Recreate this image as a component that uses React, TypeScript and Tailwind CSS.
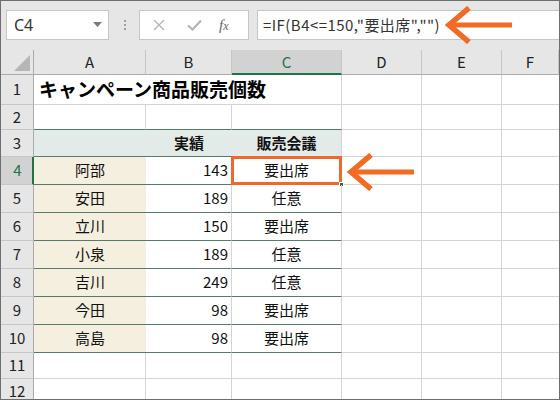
import React from 'react'

const FONT = { fontFamily: '"Noto Sans CJK JP", "Noto Sans", sans-serif' }

type Row = { a?: string; b?: string; c?: string }

// Sheet rows 1..12, only the table part carries data
const rows: Row[] = [
  {},
  {},
  { b: '実績', c: '販売会議' },
  { a: '阿部', b: '143', c: '要出席' },
  { a: '安田', b: '189', c: '任意' },
  { a: '立川', b: '150', c: '要出席' },
  { a: '小泉', b: '189', c: '任意' },
  { a: '吉川', b: '249', c: '任意' },
  { a: '今田', b: '98', c: '要出席' },
  { a: '高島', b: '98', c: '要出席' },
  {},
  {},
]

const colLetters = ['A', 'B', 'C', 'D', 'E', 'F']

function Toolbar() {
  return (
    <div className="flex h-[49px] items-start bg-[#e6e6e6] pt-[9px]">
      <div className="ml-[5px] flex h-[30px] w-[103px] items-center justify-between border border-[#c6c6c6] bg-white pl-[7px] pr-[6px]">
        <span className="text-[16px] text-[#333]" style={{ fontFamily: '"Noto Sans", sans-serif' }}>C4</span>
        <svg width="9" height="6" viewBox="0 0 9 6">
          <path d="M0 0 L9 0 L4.5 5 Z" fill="#7a7a7a" />
        </svg>
      </div>
      <div className="ml-[15px] flex h-[30px] flex-col items-center justify-center gap-[2px]">
        <span className="h-[2px] w-[2px] bg-[#a0a0a0]" />
        <span className="h-[2px] w-[2px] bg-[#a0a0a0]" />
        <span className="h-[2px] w-[2px] bg-[#a0a0a0]" />
      </div>
      <div className="ml-[13px] flex h-[30px] w-[110px] items-center border border-[#c6c6c6] bg-white">
        <svg className="ml-[13px]" width="12" height="12" viewBox="0 0 12 12">
          <path d="M1 1 L11 11 M11 1 L1 11" stroke="#b5b5b5" strokeWidth="1.4" />
        </svg>
        <svg className="ml-[22px]" width="15" height="12" viewBox="0 0 15 12">
          <path d="M1 6.5 L5.5 10.5 L14 1.5" stroke="#b5b5b5" strokeWidth="2.2" fill="none" />
        </svg>
        <span
          className="ml-[17px] text-[15px] italic text-[#666]"
          style={{ fontFamily: '"Liberation Serif", serif' }}
        >
          f<span className="text-[12px]">x</span>
        </span>
      </div>
      <div className="ml-[8px] flex h-[30px] flex-1 items-center border border-r-0 border-[#c6c6c6] bg-white pl-[5px]">
        <span className="text-[15px] tracking-[0.45px] text-[#333]" style={FONT}>
          =IF(B4&lt;=150,"要出席","")
        </span>
      </div>
    </div>
  )
}

function Arrow({ className }: { className: string }) {
  return (
    <svg className={className} width="70" height="38" viewBox="0 0 70 38">
      <path d="M24 2 L4 19 L24 36" stroke="#f26a24" strokeWidth="5.5" fill="none" strokeLinejoin="miter" />
      <path d="M5 19 L67 19" stroke="#f26a24" strokeWidth="5" />
    </svg>
  )
}

export default function App() {
  return (
    <div
      className="relative h-[400px] w-[560px] overflow-hidden border border-[#6e6e6e] bg-white"
      style={FONT}
    >
      <Toolbar />

      <div className="grid grid-cols-[33px_112px_86px_110px_80px_80px_1fr] grid-rows-[25px_30px_25px_27px_28px_28px_28px_28px_28px_28px_28px_26px_26px]">
        {/* header row */}
        <div className="relative border-r border-b border-[#ababab] bg-[#e6e6e6]">
          <svg className="absolute bottom-[3px] right-[3px]" width="16" height="16" viewBox="0 0 16 16">
            <path d="M16 0 L16 16 L0 16 Z" fill="#b6b6b6" />
          </svg>
        </div>
        {colLetters.map((l) =>
          l === 'C' ? (
            <div
              key={l}
              className="flex items-center justify-center border-r border-b-2 border-r-[#c6c6c6] border-b-[#217346] bg-[#d2d2d2] pt-[1px] text-[15px] text-[#217346]"
            >
              {l}
            </div>
          ) : (
            <div
              key={l}
              className="flex items-center justify-center border-r border-b border-r-[#c6c6c6] border-b-[#ababab] bg-[#e6e6e6] text-[15px] text-[#222]"
            >
              {l}
            </div>
          ),
        )}

        {rows.map((r, i) => {
          const n = i + 1
          const inTable = n >= 3 && n <= 10
          const dark = n >= 2 && n <= 10
          const rowHeader =
            n === 4 ? (
              <div className="flex items-center justify-center border-r-2 border-b border-r-[#217346] border-b-[#c6c6c6] bg-[#d2d2d2] pl-[2px] text-[15px] text-[#217346]">
                {n}
              </div>
            ) : (
              <div className="flex items-center justify-center border-r border-b border-r-[#ababab] border-b-[#c6c6c6] bg-[#e6e6e6] text-[15px] text-[#222]">
                {n}
              </div>
            )

          const bottom = dark ? 'border-b border-b-[#587a6d]' : 'border-b border-b-[#d4d4d4]'

          let aCls = 'flex items-center justify-center text-[15px] text-[#111] '
          let bCls = 'flex items-center text-[15px] text-[#111] '
          let cCls = 'relative flex items-center justify-center text-[15px] text-[#111] '
          if (n === 1) {
            aCls += 'border-b border-b-[#d4d4d4]'
            bCls += 'border-b border-b-[#d4d4d4]'
            cCls += 'border-r border-b border-[#d4d4d4]'
          } else if (n === 3) {
            aCls += bottom + ' bg-[#e3ebe8]'
            bCls += bottom + ' justify-center bg-[#e3ebe8] font-bold'
            cCls += bottom + ' border-r border-r-[#d4d4d4] bg-[#e3ebe8] font-bold'
          } else if (inTable) {
            aCls += bottom + ' bg-[#f5efdf]'
            bCls += bottom + ' justify-end border-r border-r-[#d4d4d4] pr-[3px]'
            cCls += bottom + ' border-r border-r-[#d4d4d4]'
          } else {
            aCls += bottom + ' border-r border-r-[#d4d4d4]'
            bCls += bottom + ' border-r border-r-[#d4d4d4]'
            cCls += bottom + ' border-r border-r-[#d4d4d4]'
          }

          return (
            <React.Fragment key={n}>
              {rowHeader}
              {n === 1 ? (
                <div className={aCls + ' relative z-10 justify-start overflow-visible'}>
                  <span className="ml-[5px] whitespace-nowrap text-[19px] font-bold text-black">
                    キャンペーン商品販売個数
                  </span>
                </div>
              ) : (
                <div className={aCls}>{r.a}</div>
              )}
              <div className={bCls}>{r.b}</div>
              <div className={cCls}>
                {r.c}
                {n === 4 && (
                  <>
                    <div className="absolute inset-[-1px] border-[3px] border-[#ef6a2a]" />
                    <div className="absolute bottom-[-3px] right-[-3px] h-[5px] w-[5px] border border-white bg-[#217346]" />
                  </>
                )}
              </div>
              <div className="border-r border-b border-[#d4d4d4]" />
              <div className="border-r border-b border-[#d4d4d4]" />
              <div className="border-b border-[#d4d4d4]" />
            </React.Fragment>
          )
        })}
      </div>

      <Arrow className="absolute left-[444px] top-[5px]" />
      <Arrow className="absolute left-[346px] top-[152px]" />
    </div>
  )
}
